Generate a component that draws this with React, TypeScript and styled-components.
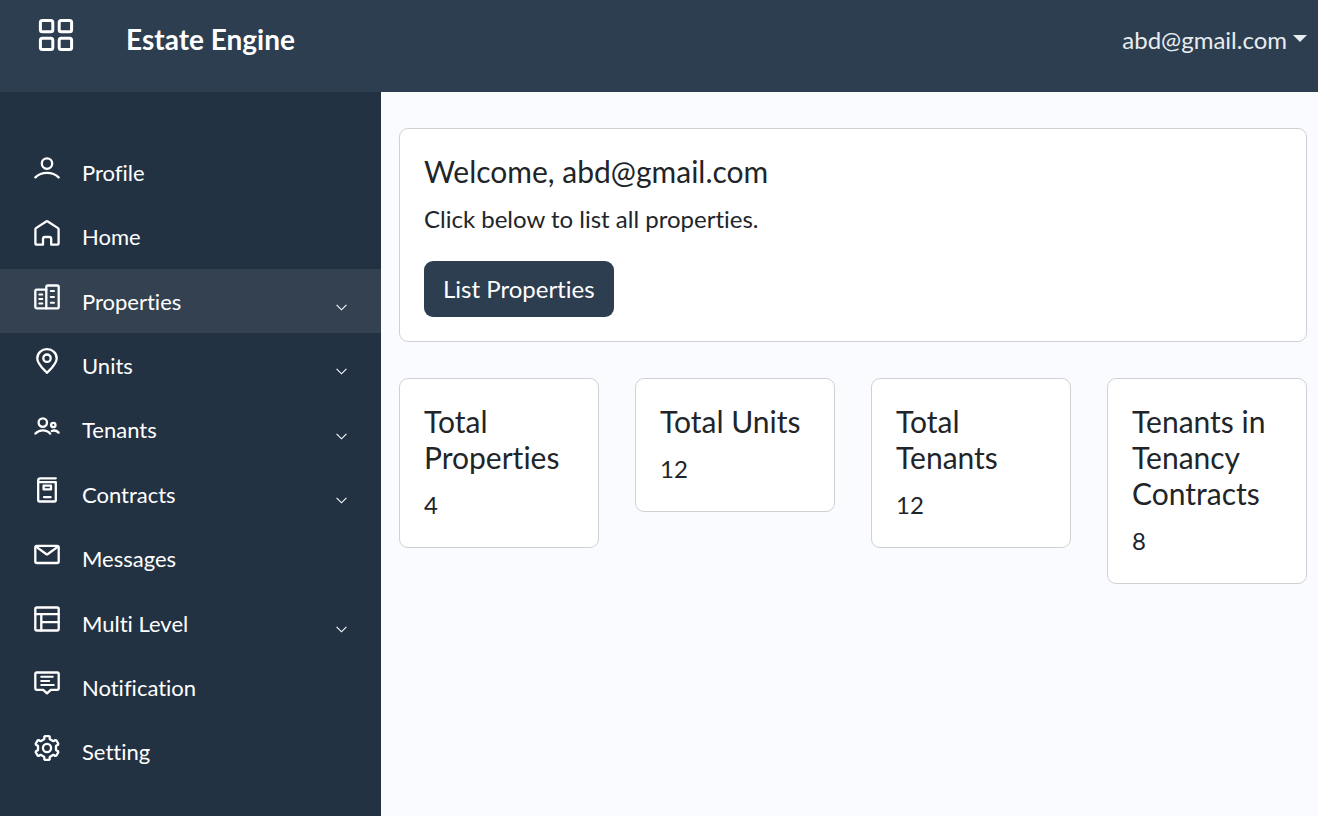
import React from 'react';
import styled, { createGlobalStyle } from 'styled-components';

const GlobalStyle = createGlobalStyle`
  *, *::before, *::after { box-sizing: border-box; }
  body {
    margin: 0;
    background: #fafbfe;
    color: #212529;
    font-family: Lato, 'Open Sans', sans-serif;
    font-size: 24px;
    font-variant-ligatures: none;
    line-height: 36px;
  }
`;

const Page = styled.div`
  display: flex;
  flex-direction: column;
  min-height: 100vh;
`;

const Header = styled.header`
  display: flex;
  align-items: center;
  min-height: 92px;
  padding: 0 11px 14px 38px;
  background: #2c3e50;
  color: #fff;
`;

const ToggleButton = styled.button`
  display: flex;
  margin: 0 52px 0 0;
  padding: 0 0 8px;
  border: 0;
  background: none;
  color: inherit;
  cursor: pointer;
`;

const Brand = styled.a`
  color: #fff;
  font-size: 28px;
  font-weight: 700;
  text-decoration: none;
`;

const AccountButton = styled.button`
  display: flex;
  align-items: center;
  gap: 6px;
  margin-left: auto;
  padding: 2px 0 0;
  border: 0;
  background: none;
  color: #e9ecef;
  font: inherit;
  font-variant-ligatures: none;
  cursor: pointer;
`;

const Caret = styled.span`
  margin-bottom: 4px;
  border-top: 7px solid;
  border-right: 7px solid transparent;
  border-left: 7px solid transparent;
`;

const Body = styled.div`
  display: flex;
  flex: 1;
`;

const Sidebar = styled.nav`
  display: flex;
  flex: 0 0 381px;
  padding: 48px 0 32px;
  background: #233242;
`;

const NavList = styled.ul`
  display: flex;
  flex: 1;
  flex-direction: column;
  margin: 0;
  padding: 0;
  list-style: none;
`;

const NavItem = styled.li`
  display: flex;
  flex: 1 0 64px;
  max-height: 72px;
`;

const NavLink = styled.a<{ $active?: boolean }>`
  display: flex;
  flex: 1;
  align-items: center;
  padding: 1px 34px 0;
  background: ${({ $active }) => ($active ? '#334151' : 'transparent')};
  color: #fff;
  font-size: 22px;
  text-decoration: none;
`;

const NavIcon = styled.svg`
  flex: none;
  width: 26px;
  height: 26px;
  margin: 0 22px 9px 0;
  fill: none;
  stroke: currentColor;
  stroke-width: 2.3;
  stroke-linecap: round;
  stroke-linejoin: round;
`;

const Chevron = styled.svg`
  width: 11px;
  height: 7px;
  margin: 12px 0 0 auto;
  fill: none;
  stroke: currentColor;
  stroke-width: 1.1;
`;

const Main = styled.main`
  display: flex;
  flex: 1;
  flex-direction: column;
  gap: 36px;
  min-width: 0;
  padding: 36px 11px 36px 18px;
`;

const Card = styled.section`
  padding: 24px;
  border: 1px solid #d0d1d3;
  border-radius: 9px;
  background: #fff;
`;

const CardTitle = styled.h2`
  margin: 0 0 12px;
  font-size: 30px;
  font-weight: 400;
  line-height: 36px;
`;

const CardText = styled.p`
  margin: 0;
`;

const PrimaryButton = styled.button`
  margin-top: 24px;
  padding: 10px 19px;
  border: 0;
  border-radius: 9px;
  background: #2c3e50;
  color: #fff;
  font: inherit;
  font-variant-ligatures: none;
  cursor: pointer;
`;

const Stats = styled.div`
  display: grid;
  grid-template-columns: repeat(4, minmax(0, 1fr));
  align-items: start;
  gap: 36px;
`;

/* Outline of a six-toothed cog centred in a 26-unit box. */
const cogPath = (() => {
  const points: string[] = [];
  for (let i = 0; i < 6; i++) {
    const a = ((i * 60 - 90) * Math.PI) / 180;
    const corners = [[8.4, -3.4], [9, -2.7], [11.2, -2.7], [11.9, -2], [11.9, 2], [11.2, 2.7], [9, 2.7], [8.4, 3.4]];
    for (const [r, t] of corners) {
      const x = 13 + r * Math.cos(a) - t * Math.sin(a);
      const y = 13 + r * Math.sin(a) + t * Math.cos(a);
      points.push(`${x.toFixed(2)} ${y.toFixed(2)}`);
    }
  }
  return `M${points.join('L')}Z`;
})();

const icons = {
  profile: (
    <>
      <circle cx="13" cy="8.6" r="5.2" />
      <path d="M1.4 22.4C7.4 16.4 18.6 16.4 24.6 22.4" />
    </>
  ),
  home: (
    <path d="M1.4 9.2Q1.4 8.5 2 8.1L12.2 1.5Q13 1 13.8 1.5L24 8.1Q24.6 8.5 24.6 9.2V23.4Q24.6 24.7 23.3 24.7H17.2V19Q17.2 17 15.2 17H10.8Q9 17 9 19V24.7H2.7Q1.4 24.7 1.4 23.4Z" />
  ),
  buildings: (
    <>
      <path d="M12.3 24.4H2.6Q1.3 24.4 1.3 23.1V7Q1.3 5.7 2.6 5.7H12.3" />
      <path d="M12.3 24.4V3Q12.3 1.5 13.8 1.5H23.2Q24.7 1.5 24.7 3V23Q24.7 24.4 23.2 24.4Z" />
      <path d="M5.3 10.4H8.3M5.3 15H8.3M5.3 19.5H8.3M16.8 7.1H20M16.8 12.9H20M16.8 18.7H20" strokeWidth="2" />
    </>
  ),
  pin: (
    <>
      <path d="M13 24.8C9 20.6 3.3 15.8 3.3 10.4C3.3 5.1 7.4 1.2 13 1.2C18.6 1.2 22.7 5.1 22.7 10.4C22.7 15.8 17 20.6 13 24.8Z" />
      <circle cx="13" cy="10.2" r="3.7" />
    </>
  ),
  people: (
    <>
      <circle cx="8.8" cy="9.6" r="4.2" />
      <circle cx="19.3" cy="12" r="2.2" />
      <path d="M1.5 20.6C5.2 16.2 12.6 16.2 16.1 20.6M17.8 18C20.2 17.1 22.8 17.7 24.6 19.6" />
    </>
  ),
  contract: (
    <>
      <path d="M21.8 1.3H6.4Q4.2 1.3 4.2 3.4V22.9Q4.2 24.5 5.8 24.5H20.4Q21.8 24.5 21.8 23V5.2H6.2Q4.2 5.2 4.2 3.4" />
      <path d="M9.6 8.6H17V12.4H9.6ZM10 20.2H16.6" />
    </>
  ),
  mail: (
    <>
      <rect x="1.3" y="3.8" width="23.4" height="17.2" rx="1.6" />
      <path d="M2 4.6L12.1 12Q13 12.6 13.9 12L24 4.6" />
    </>
  ),
  layout: (
    <>
      <rect x="1.3" y="1.5" width="23.4" height="23" rx="1.6" />
      <path d="M1.3 8.2H24.7M7.3 8.2V24.5M7.3 16.2H24.7" />
    </>
  ),
  comment: (
    <>
      <path d="M2.8 2.5H23.2Q24.7 2.5 24.7 4V18.3Q24.7 19.8 23.2 19.8H16.8L13 23.4L9.2 19.8H2.8Q1.3 19.8 1.3 18.3V4Q1.3 2.5 2.8 2.5Z" />
      <path d="M7.2 6.7H18.8M7.2 11H15.2M7.2 15H19.8" strokeWidth="2" />
    </>
  ),
  cog: (
    <>
      <path d={cogPath} />
      <circle cx="13" cy="13" r="4.1" />
    </>
  ),
};

type NavEntry = {
  label: string;
  icon: keyof typeof icons;
  expandable?: boolean;
  active?: boolean;
};

const navEntries: NavEntry[] = [
  { label: 'Profile', icon: 'profile' },
  { label: 'Home', icon: 'home' },
  { label: 'Properties', icon: 'buildings', expandable: true, active: true },
  { label: 'Units', icon: 'pin', expandable: true },
  { label: 'Tenants', icon: 'people', expandable: true },
  { label: 'Contracts', icon: 'contract', expandable: true },
  { label: 'Messages', icon: 'mail' },
  { label: 'Multi Level', icon: 'layout', expandable: true },
  { label: 'Notification', icon: 'comment' },
  { label: 'Setting', icon: 'cog' },
];

const stats = [
  { title: 'Total Properties', value: 4 },
  { title: 'Total Units', value: 12 },
  { title: 'Total Tenants', value: 12 },
  { title: 'Tenants in Tenancy Contracts', value: 8 },
];

export default function App() {
  return (
    <Page>
      <GlobalStyle />
      <Header>
        <ToggleButton type="button" aria-label="Toggle sidebar">
          <svg width="36" height="34" viewBox="0 0 36 34" fill="none" stroke="currentColor" strokeWidth="3">
            <rect x="2.4" y="2.4" width="12.4" height="11.4" rx="2" />
            <rect x="21.2" y="2.4" width="12.4" height="11.4" rx="2" />
            <rect x="2.4" y="20.2" width="12.4" height="11.4" rx="2" />
            <rect x="21.2" y="20.2" width="12.4" height="11.4" rx="2" />
          </svg>
        </ToggleButton>
        <Brand href="#">Estate Engine</Brand>
        <AccountButton type="button" aria-haspopup="menu">
          abd@gmail.com
          <Caret />
        </AccountButton>
      </Header>
      <Body>
        <Sidebar aria-label="Main">
          <NavList>
            {navEntries.map(({ label, icon, expandable, active }) => (
              <NavItem key={label}>
                <NavLink href="#" $active={active}>
                  <NavIcon viewBox="0 0 26 26" aria-hidden="true">
                    {icons[icon]}
                  </NavIcon>
                  {label}
                  {expandable && (
                    <Chevron viewBox="0 0 11 7" aria-hidden="true">
                      <path d="M0.6 0.8L5.5 5.8L10.4 0.8" />
                    </Chevron>
                  )}
                </NavLink>
              </NavItem>
            ))}
          </NavList>
        </Sidebar>
        <Main>
          <Card>
            <CardTitle>Welcome, abd@gmail.com</CardTitle>
            <CardText>Click below to list all properties.</CardText>
            <PrimaryButton type="button">List Properties</PrimaryButton>
          </Card>
          <Stats>
            {stats.map(({ title, value }) => (
              <Card key={title}>
                <CardTitle>{title}</CardTitle>
                <CardText>{value}</CardText>
              </Card>
            ))}
          </Stats>
        </Main>
      </Body>
    </Page>
  );
}
